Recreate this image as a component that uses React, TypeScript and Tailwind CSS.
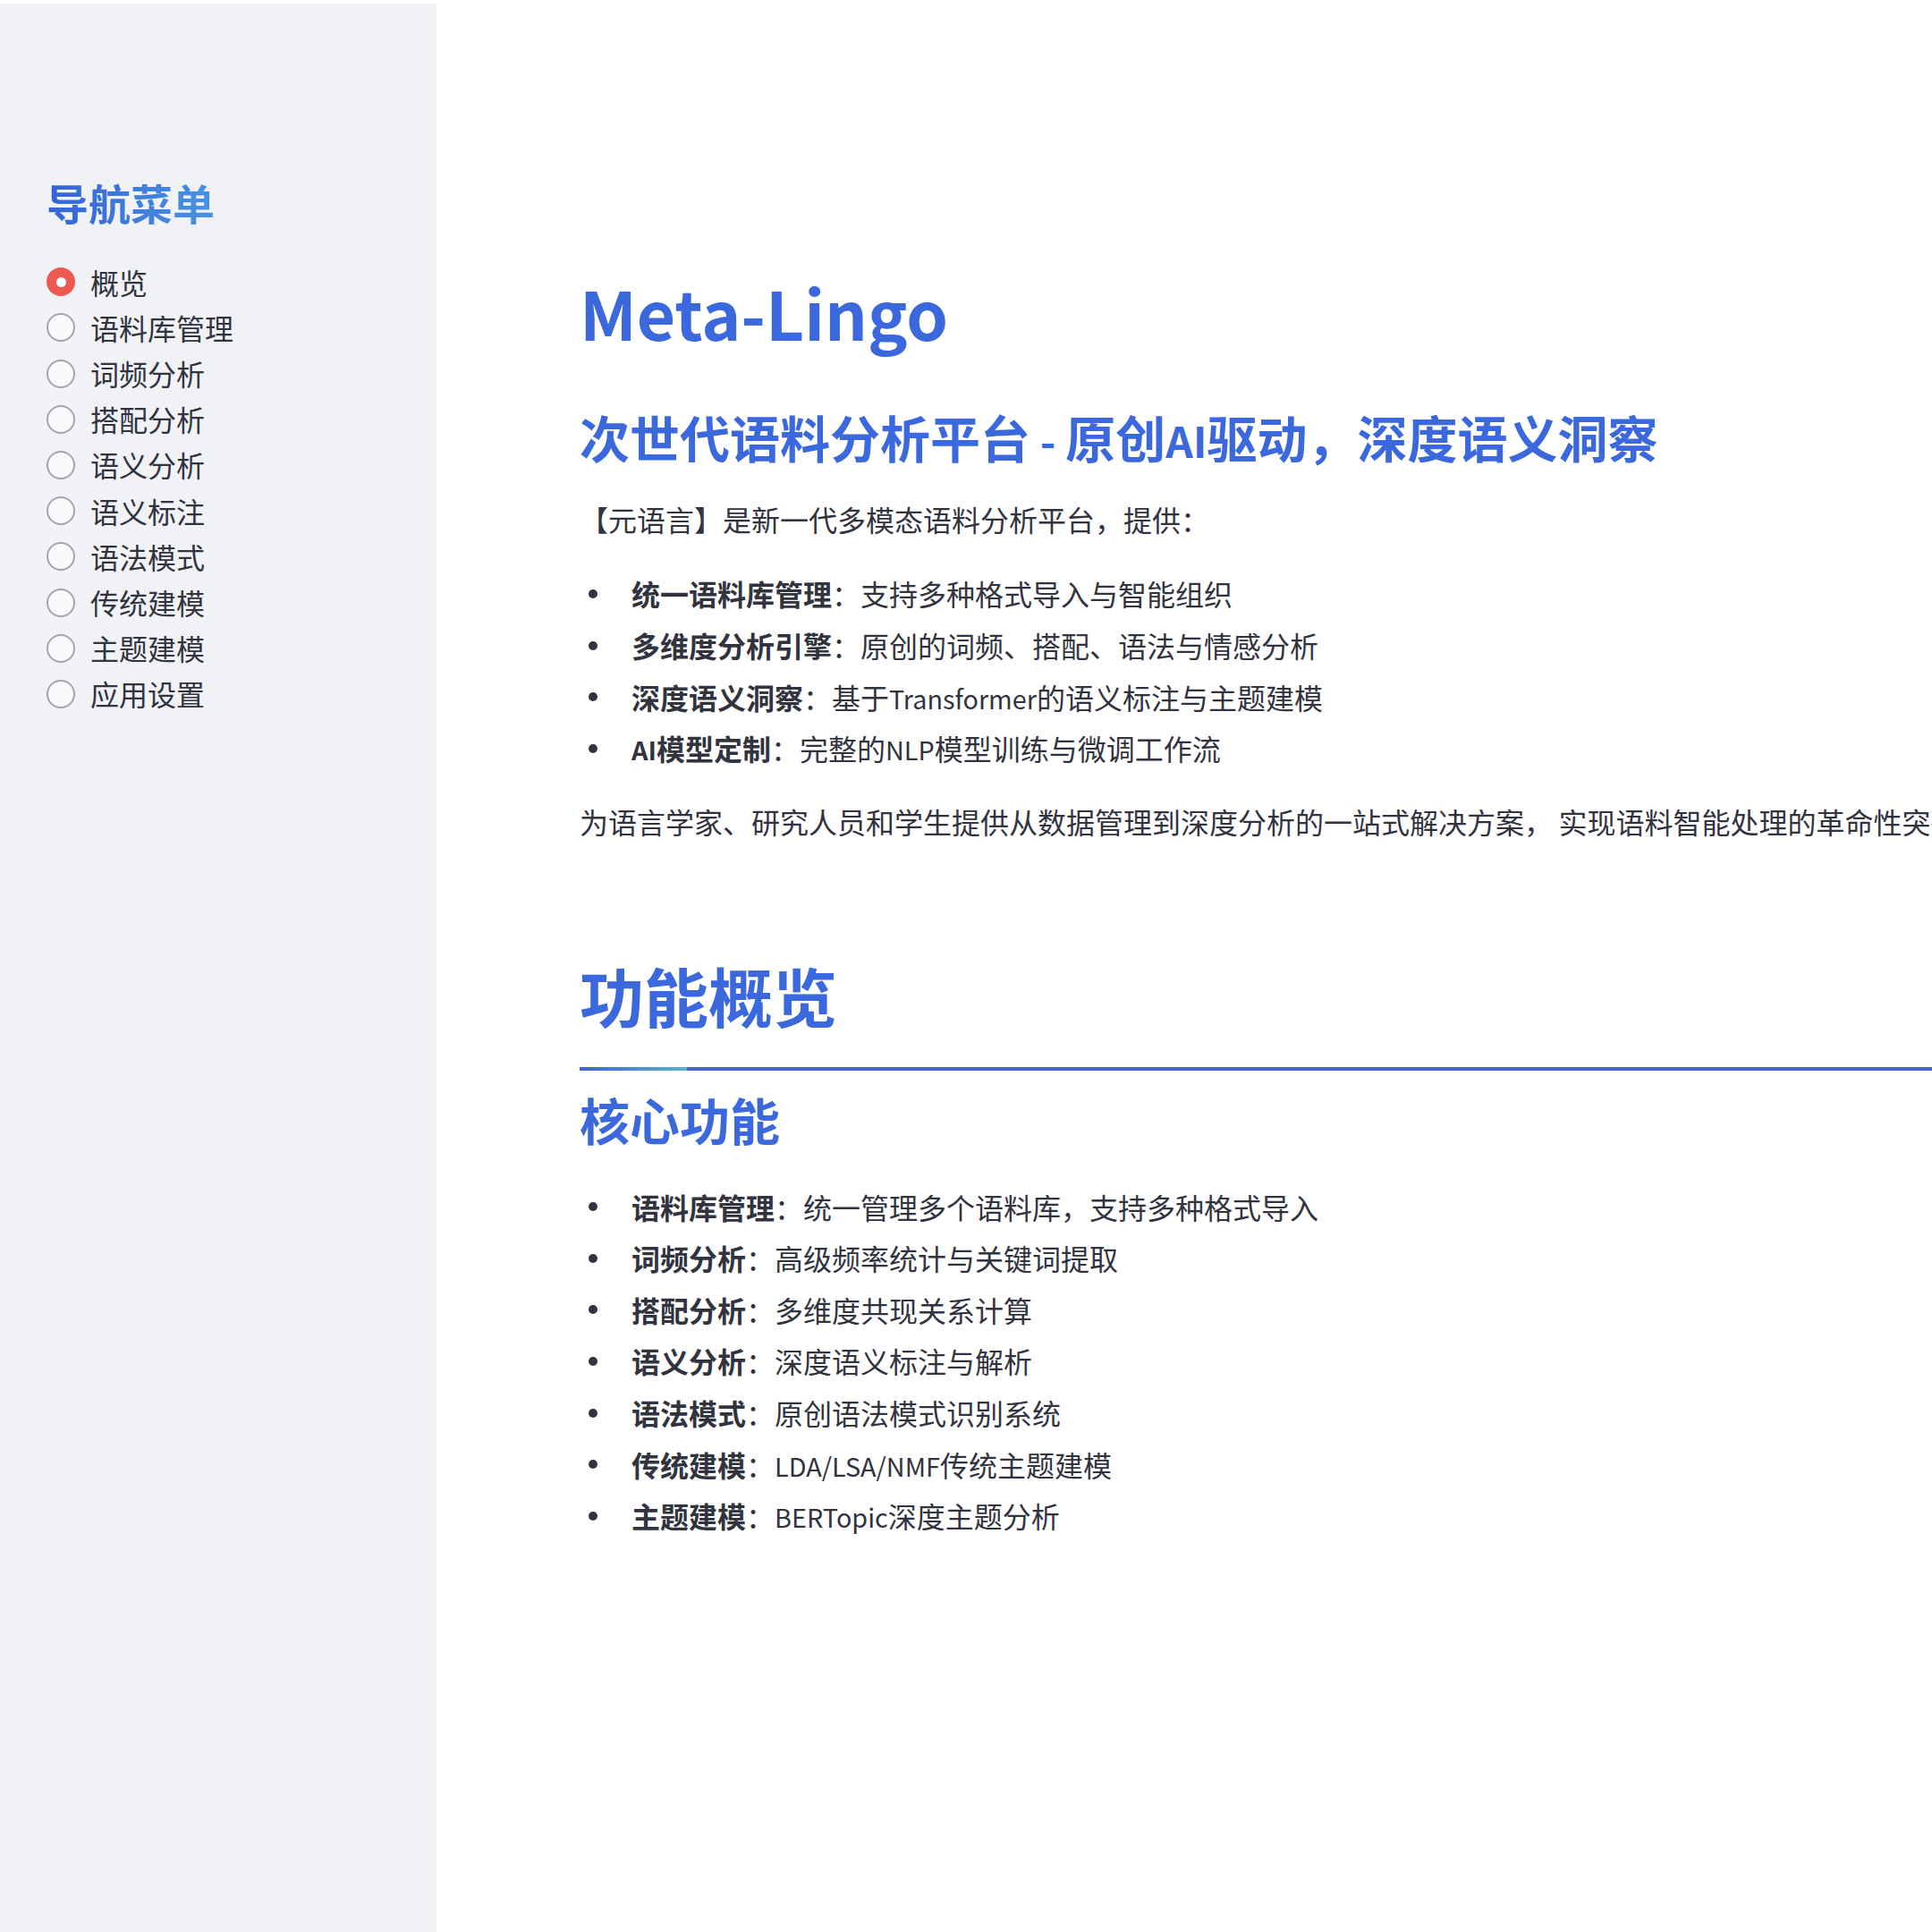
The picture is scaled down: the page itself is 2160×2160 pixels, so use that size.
import React from "react";

const FONT = { fontFamily: '"Noto Sans CJK SC", "Noto Sans", sans-serif' };

function T({ s, h }: { s: string; h?: boolean }) {
  const parts = s.split(/([\x20-\x7e]+)/);
  const cls = h ? "text-[0.85em] leading-none" : "text-[0.9em] leading-none";
  return (
    <>
      {parts.map((p, i) =>
        /^[\x20-\x7e]+$/.test(p) ? (
          <span key={i} className={cls}>
            {p}
          </span>
        ) : (
          <React.Fragment key={i}>{p}</React.Fragment>
        )
      )}
    </>
  );
}

const menu = ["概览", "语料库管理", "词频分析", "搭配分析", "语义分析", "语义标注", "语法模式", "传统建模", "主题建模", "应用设置"];

const intro: [string, string][] = [
  ["统一语料库管理", "支持多种格式导入与智能组织"],
  ["多维度分析引擎", "原创的词频、搭配、语法与情感分析"],
  ["深度语义洞察", "基于Transformer的语义标注与主题建模"],
  ["AI模型定制", "完整的NLP模型训练与微调工作流"],
];

const core: [string, string][] = [
  ["语料库管理", "统一管理多个语料库，支持多种格式导入"],
  ["词频分析", "高级频率统计与关键词提取"],
  ["搭配分析", "多维度共现关系计算"],
  ["语义分析", "深度语义标注与解析"],
  ["语法模式", "原创语法模式识别系统"],
  ["传统建模", "LDA/LSA/NMF传统主题建模"],
  ["主题建模", "BERTopic深度主题分析"],
];

function BulletList({ items, className }: { items: [string, string][]; className: string }) {
  return (
    <ul className={"flex flex-col gap-[6.4px] " + className}>
      {items.map(([b, t]) => (
        <li key={b} className="flex items-center h-[51.2px] text-[32px] leading-[51.2px] text-[#31333f] whitespace-nowrap">
          <span className="w-[58px] h-full flex items-center pl-[10px]">
            <span className="block w-[10px] h-[10px] rounded-full bg-[#31333f]" />
          </span>
          <span>
            <strong className="font-bold">
              <T s={b} />
            </strong>
            ：<T s={t} />
          </span>
        </li>
      ))}
    </ul>
  );
}

export default function App() {
  return (
    <div className="w-[2160px] h-[2160px] flex flex-col bg-white overflow-hidden" style={FONT}>
      <div className="h-[4px] bg-white shrink-0" />
      <div className="flex flex-1 min-h-0">
        <aside className="w-[488px] shrink-0 bg-[#f0f2f6] pl-[52px] pt-[194px]">
          <h2 className="text-[47px] leading-[55.2px] font-bold bg-gradient-to-r from-[#3563d6] to-[#4893e2] bg-clip-text text-transparent w-fit">
            导航菜单
          </h2>
          <div className="mt-[36.4px] flex flex-col">
            {menu.map((m, i) => (
              <div key={m} className="flex items-center h-[51.2px] gap-[17px]">
                {i === 0 ? (
                  <span className="w-[32px] h-[32px] rounded-full bg-[#ec5a51] flex items-center justify-center shrink-0">
                    <span className="w-[11px] h-[11px] rounded-full bg-white" />
                  </span>
                ) : (
                  <span className="w-[32px] h-[32px] rounded-full border-2 border-[#a3a5ac] bg-[#f9fafc] shrink-0" />
                )}
                <span className="text-[32px] leading-[51.2px] text-[#31333f]">{m}</span>
              </div>
            ))}
          </div>
        </aside>
        <main className="flex-1 min-w-0 overflow-hidden pl-[160px] pt-[286px]">
          <h1 className="text-[88px] leading-[106px] font-bold text-[#3b68dc]">
            <T s="Meta-Lingo" h />
          </h1>
          <h3 className="mt-[58px] text-[56px] leading-[67.2px] font-bold text-[#3b68dc] whitespace-nowrap">
            <T s="次世代语料分析平台 - 原创AI驱动，深度语义洞察" h />
          </h3>
          <p className="mt-[34px] text-[32px] leading-[51.2px] text-[#31333f] whitespace-nowrap">
            【元语言】是新一代多模态语料分析平台，提供：
          </p>
          <BulletList items={intro} className="mt-[32px]" />
          <p className="mt-[30.6px] text-[32px] leading-[51.2px] text-[#31333f] whitespace-nowrap">
            <T s="为语言学家、研究人员和学生提供从数据管理到深度分析的一站式解决方案， 实现语料智能处理的革命性突破。" />
          </p>
          <h2 className="mt-[125px] text-[72px] leading-[86.4px] font-bold text-[#3b68dc]">功能概览</h2>
          <div className="mt-[37.6px] flex h-[4px]">
            <div className="w-[120px] h-full bg-gradient-to-r from-[#3f62d2] to-[#5cb3c9]" />
            <div className="flex-1 h-full bg-[#4265d3]" />
          </div>
          <h3 className="mt-[20px] text-[56px] leading-[67.2px] font-bold text-[#3b68dc]">核心功能</h3>
          <BulletList items={core} className="mt-[39.4px]" />
        </main>
      </div>
    </div>
  );
}
